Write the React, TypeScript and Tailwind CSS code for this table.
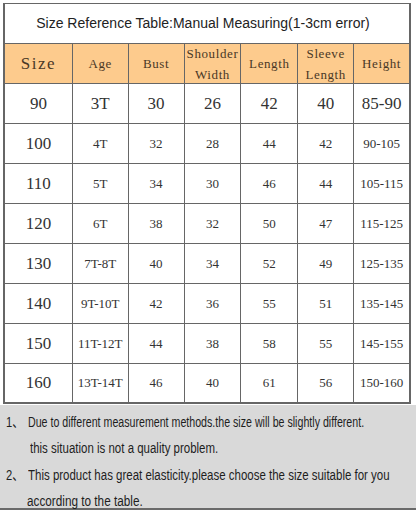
import React from "react";

const cols = ["w-[68px]", "w-[56px]", "w-[56px]", "w-[57px]", "w-[57px]", "w-[56px]", "w-[57px]"];

const rows: string[][] = [
  ["90", "3T", "30", "26", "42", "40", "85-90"],
  ["100", "4T", "32", "28", "44", "42", "90-105"],
  ["110", "5T", "34", "30", "46", "44", "105-115"],
  ["120", "6T", "38", "32", "50", "47", "115-125"],
  ["130", "7T-8T", "40", "34", "52", "49", "125-135"],
  ["140", "9T-10T", "42", "36", "55", "51", "135-145"],
  ["150", "11T-12T", "44", "38", "58", "55", "145-155"],
  ["160", "13T-14T", "46", "40", "61", "56", "150-160"],
];

const serif = { fontFamily: '"Liberation Serif", "DejaVu Serif", serif' };
const sans = { fontFamily: '"Liberation Sans", Arial, "Noto Sans CJK SC", sans-serif' };

export default function App() {
  return (
    <div className="w-[416px] h-[511px] bg-white overflow-hidden relative">
      <div className="pt-[3px] pl-[3px]">
        <div className="w-[408px] border-l-2 border-t border-[#666]">
          <div
            className="h-[40px] flex items-center justify-center border-r-2 border-b border-[#666] text-[14px] text-[#222] pr-[8px]"
            style={sans}
          >
            <span className="whitespace-nowrap">Size Reference Table:Manual Measuring(1-3cm error)</span>
          </div>
          <div className="flex h-[40px] bg-[#fdcb8d]">
            {["Size", "Age", "Bust", "Shoulder|Width", "Length", "Sleeve|Length", "Height"].map((h, i) => (
              <div
                key={i}
                className={`${cols[i]} ${i === 6 ? "border-r-2" : "border-r"} border-b border-[#666] flex flex-col items-center justify-center text-[#4a3826] leading-[21px] ${i === 0 ? "text-[17px] tracking-[1.5px]" : "text-[13px] tracking-[0.6px]"}`}
                style={serif}
              >
                {h.split("|").map((t) => (
                  <span key={t}>{t}</span>
                ))}
              </div>
            ))}
          </div>
          {rows.map((r, ri) => (
            <div key={ri} className="flex h-[40px]">
              {r.map((c, ci) => (
                <div
                  key={ci}
                  className={`${cols[ci]} ${ci === 6 ? "border-r-2" : "border-r"} ${ri === rows.length - 1 ? "border-b-2" : "border-b"} border-[#666] flex items-center justify-center text-[#333] ${
                    ri === 0 || ci === 0 ? "text-[17px]" : "text-[13px]"
                  }`}
                  style={serif}
                >
                  {c}
                </div>
              ))}
            </div>
          ))}
        </div>
      </div>
      <div
        className="mt-[1px] h-[105px] bg-[#d9d9d9] border-b-2 border-[#6a6a6a] text-[14px] text-[#1e1e1e] pt-[4px]"
        style={sans}
      >
        <div className="h-[26.5px] flex items-center pl-[6px]">
          <span className="inline-block w-[22px] scale-x-[0.8] origin-left">1、</span>
          <span className="whitespace-nowrap inline-block origin-left scale-x-[0.76]">
            Due to different measurement methods.the size will be slightly different.
          </span>
        </div>
        <div className="h-[26.5px] flex items-center pl-[30px]">
          <span className="whitespace-nowrap inline-block origin-left scale-x-[0.82]">
            this situation is not a quality problem.
          </span>
        </div>
        <div className="h-[26.5px] flex items-center pl-[6px]">
          <span className="inline-block w-[22px] scale-x-[0.8] origin-left">2、</span>
          <span className="whitespace-nowrap inline-block origin-left scale-x-[0.82]">
            This product has great elasticity.please choose the size suitable for you
          </span>
        </div>
        <div className="h-[26.5px] flex items-center pl-[27px]">
          <span className="whitespace-nowrap inline-block origin-left scale-x-[0.84]">according to the table.</span>
        </div>
      </div>
    </div>
  );
}
